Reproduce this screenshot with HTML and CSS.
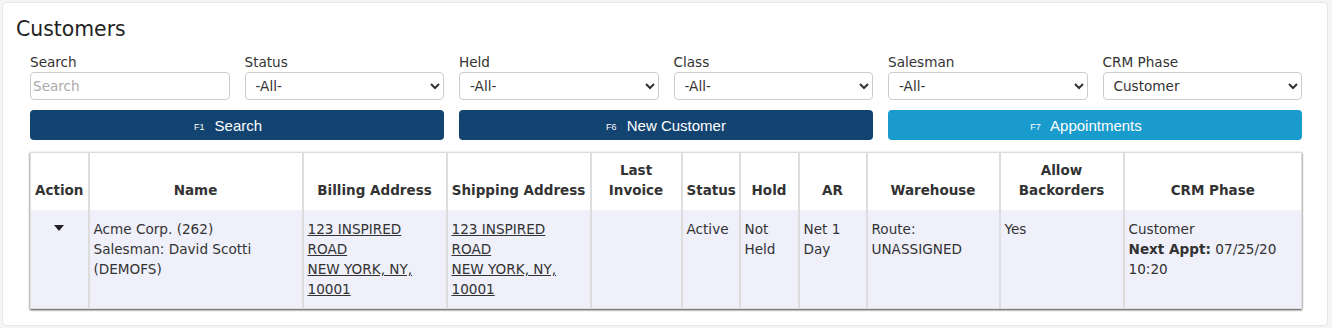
FILE: index.html
```html
<!DOCTYPE html>
<html lang="en">
<head>
<meta charset="utf-8"/>
<title>Customers</title>
<link rel="stylesheet" href="styles.css">
</head>
<body>
<div class="card">
<h1>Customers</h1>
<div class="filters">
<div class="field">
<label>Search</label>
<input type="text" placeholder="Search"/>
</div>
<div class="field">
<label>Status</label>
<select><option>-All-</option></select>
</div>
<div class="field">
<label>Held</label>
<select><option>-All-</option></select>
</div>
<div class="field">
<label>Class</label>
<select><option>-All-</option></select>
</div>
<div class="field">
<label>Salesman</label>
<select><option>-All-</option></select>
</div>
<div class="field">
<label>CRM Phase</label>
<select><option>Customer</option></select>
</div>
<button class="btn shifted"><small>F1</small> Search</button>
<button class="btn"><small>F6</small> New Customer</button>
<button class="btn info shifted"><small>F7</small> Appointments</button>
</div>
<table class="grid">
<colgroup>
<col style="width:58px"><col style="width:214px"><col style="width:144px"><col style="width:144px">
<col style="width:91px"><col style="width:58px"><col style="width:59px"><col style="width:68px">
<col style="width:133px"><col style="width:124px"><col>
</colgroup>
<thead>
<tr>
<th>Action</th>
<th>Name</th>
<th>Billing Address</th>
<th>Shipping Address</th>
<th>Last Invoice</th>
<th>Status</th>
<th>Hold</th>
<th>AR</th>
<th>Warehouse</th>
<th>Allow Backorders</th>
<th>CRM Phase</th>
</tr>
</thead>
<tbody>
<tr>
<td class="action"><span class="caret"></span></td>
<td>Acme Corp. (262)<br>Salesman: David Scotti (DEMOFS)</td>
<td><a href="#">123 INSPIRED ROAD<br>NEW YORK, NY, 10001</a></td>
<td><a href="#">123 INSPIRED ROAD<br>NEW YORK, NY, 10001</a></td>
<td></td>
<td>Active</td>
<td>Not Held</td>
<td>Net 1 Day</td>
<td>Route: UNASSIGNED</td>
<td>Yes</td>
<td>Customer<br><b>Next Appt:</b> 07/25/20 10:20</td>
</tr>
</tbody>
</table>
</div>
</body>
</html>
```

FILE: styles.css
```css
* {
  box-sizing: border-box;
}

body {
  margin: 0;
  padding: 2px;
  background-color: #f4f4f4;
  font-family: 'DejaVu Sans', Verdana, sans-serif;
  font-size: 13.6px;
  color: #333;
}

.card {
  background-color: #fff;
  border: 1px solid #e6e6e6;
  border-radius: 4px;
  width: 1326px;
  height: 324px;
  padding: 13px 24px 0 27px;
}

.card h1 {
  margin: 0 0 12px -14px;
  font-size: 20.4px;
  font-weight: 400;
  color: #222;
  line-height: 26px;
}

.filters {
  display: grid;
  grid-template-columns: repeat(6, 1fr);
  column-gap: 15px;
  row-gap: 10px;
  width: 1272px;
}

.field label {
  display: block;
  font-size: 13.6px;
  line-height: 16px;
  color: #333;
  margin-bottom: 2px;
}

.field input,
.field select {
  width: 100%;
  height: 28px;
  border: 1px solid #ccc;
  border-radius: 4px;
  font-family: 'DejaVu Sans', Verdana, sans-serif;
  font-size: 13.6px;
  color: #333;
  background-color: #fff;
}

.field input {
  padding: 0 2px;
}

.field input::placeholder {
  color: #aaa;
}

.field select {
  padding: 0 6px;
}

.btn {
  grid-column: span 2;
  height: 30px;
  border: none;
  border-radius: 4px;
  background-color: #134370;
  color: #fff;
  font-family: 'Liberation Sans', Arial, sans-serif;
  font-size: 15px;
}

.btn.shifted {
  padding-right: 24px;
}

.btn small {
  font-size: 9px;
  margin-right: 6px;
  vertical-align: 1px;
}

.btn.info {
  background-color: #1a9bcd;
}

.grid {
  margin-top: 12px;
  width: 1272px;
  table-layout: fixed;
  border-collapse: collapse;
  border: 1px solid #ddd;
  box-shadow: 0 1px 2px rgba(0, 0, 0, 0.75);
}

.grid th {
  height: 57px;
  vertical-align: bottom;
  text-align: center;
  font-size: 13.5px;
  font-weight: bold;
  color: #333;
  padding: 0 4px 10px;
  line-height: 20px;
  border-left: 2px solid #ddd;
  background-color: #fff;
}

.grid td {
  vertical-align: top;
  padding: 9px 4px 9px;
  line-height: 20px;
  height: 98px;
  border-left: 2px solid #ddd;
  background-color: #eff0fa;
}

.grid th:first-child,
.grid td:first-child {
  border-left: none;
}

.grid a {
  color: #333;
}

.action {
  text-align: center;
}

.caret {
  display: inline-block;
  width: 0;
  height: 0;
  border-left: 5px solid transparent;
  border-right: 5px solid transparent;
  border-top: 6px solid #222;
  vertical-align: 3px;
}
```
